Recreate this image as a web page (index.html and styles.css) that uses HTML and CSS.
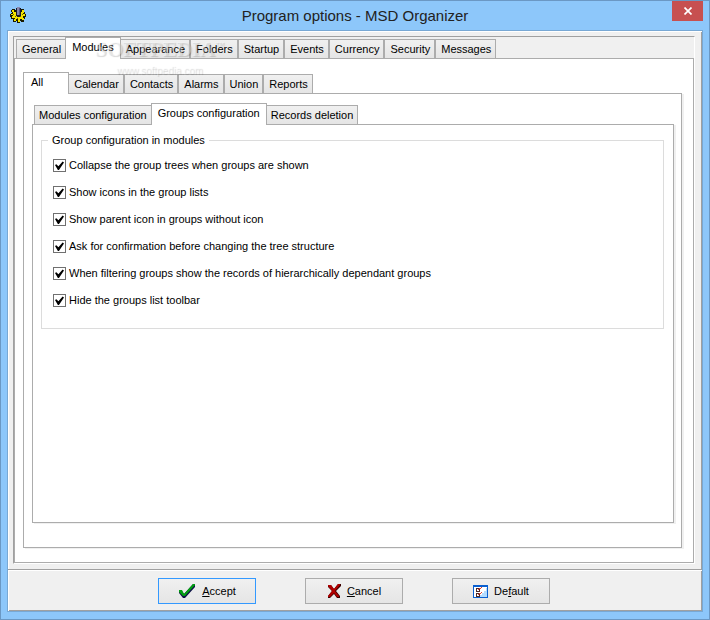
FILE: index.html
```html
<!DOCTYPE html>
<html lang="en">
<head>
    <meta charset="UTF-8">
    <meta name="viewport" content="width=device-width, initial-scale=1.0">
    <title>Program options - MSD Organizer</title>
    <link rel="stylesheet" href="styles.css">
</head>
<body>
    <div class="window">
        <header class="titlebar">
            <svg class="app-icon" width="18" height="18" viewBox="0 0 18 18" shape-rendering="crispEdges" aria-hidden="true">
                <path fill="#1a1a00" d="M3 3h3v1h6V3h3v3h1v2h1v3h-1v2h-1v3h-3v-1h-1v2H8v-2H7v1H4v-3H2v-2H1V8h1V7h1V6H2V4h1z"/>
                <path fill="#f4e400" d="M3 4h2v2h2v3h4V6h2V4h2v3h-1v1h2v2h-2v2h1v2h-2v-1h-2v3H9v-3H7v2H5v-2h1v-1H3v-2h1V9H2V8h2V6H3z"/>
                <path fill="#6b6400" d="M6 10h1v1H6zM11 10h1v1h-1zM8 12h1v1H8zM13 8h1v1h-1zM4 8h1v1H4z"/>
                <path fill="#1a1a2a" d="M7 2h1v8H7zM11 2h1v8h-1zM8 9h3v2H8z"/>
                <path fill="#8888ae" d="M8 1h3v8H8z"/>
                <path fill="#55557c" d="M10 2h1v7h-1z"/>
            </svg>
            <h1>Program options - MSD Organizer</h1>
            <button class="close" aria-label="Close">
                <svg width="8" height="8" viewBox="0 0 8 8"><path d="M.5.5l7 7M7.5.5l-7 7" stroke="#fff" stroke-width="1.7"/></svg>
            </button>
        </header>

        <main class="client">
            <div class="bevel">
                <div class="tabs" role="tablist">
                    <button class="tab" role="tab">General</button>
                    <button class="tab active" role="tab" aria-selected="true">Modules</button>
                    <button class="tab" role="tab">Appearance</button>
                    <button class="tab" role="tab">Folders</button>
                    <button class="tab" role="tab">Startup</button>
                    <button class="tab" role="tab">Events</button>
                    <button class="tab" role="tab">Currency</button>
                    <button class="tab" role="tab">Security</button>
                    <button class="tab" role="tab">Messages</button>
                </div>
                <section class="pane pane-main">
                    <div class="tabs" role="tablist">
                        <button class="tab active first" role="tab" aria-selected="true">All</button>
                        <button class="tab" role="tab">Calendar</button>
                        <button class="tab" role="tab">Contacts</button>
                        <button class="tab" role="tab">Alarms</button>
                        <button class="tab" role="tab">Union</button>
                        <button class="tab" role="tab">Reports</button>
                    </div>
                    <section class="pane pane-modules">
                        <div class="tabs tabs-narrow" role="tablist">
                            <button class="tab" role="tab">Modules configuration</button>
                            <button class="tab active" role="tab" aria-selected="true">Groups configuration</button>
                            <button class="tab" role="tab">Records deletion</button>
                        </div>
                        <section class="pane pane-groups">
                            <fieldset>
                                <legend>Group configuration in modules</legend>
                                <label><input type="checkbox" checked>Collapse the group trees when groups are shown</label>
                                <label><input type="checkbox" checked>Show icons in the group lists</label>
                                <label><input type="checkbox" checked>Show parent icon in groups without icon</label>
                                <label><input type="checkbox" checked>Ask for confirmation before changing the tree structure</label>
                                <label><input type="checkbox" checked>When filtering groups show the records of hierarchically dependant groups</label>
                                <label><input type="checkbox" checked>Hide the groups list toolbar</label>
                            </fieldset>
                        </section>
                    </section>
                </section>
            </div>

            <footer class="actions">
                <button class="action primary">
                    <svg width="18" height="16" viewBox="0 0 18 16" aria-hidden="true">
                        <path fill="#10104a" d="M1 8h3l2 3L15 1h2v3L7 15H5L1 10z"/>
                        <path fill="#00a010" d="M1 7h3l2 4L15 1h2v1L7 13H5L1 9z"/>
                    </svg>
                    <span><u>A</u>ccept</span>
                </button>
                <button class="action">
                    <svg width="14" height="16" viewBox="0 0 14 16" aria-hidden="true">
                        <path fill="#3a0000" d="M1 2h3l3 4 4-5h3v2L9 8l4 5v2h-3l-3-4-4 4H1v-2l4-5-4-4z"/>
                        <path fill="#b00000" d="M1 2h3l3 4 4-5h2v1L8 8l4 5v1h-2L7 10l-4 4H1v-1l4-5-4-5z"/>
                    </svg>
                    <span><u>C</u>ancel</span>
                </button>
                <button class="action">
                    <svg width="15" height="13" viewBox="0 0 15 13" shape-rendering="crispEdges" aria-hidden="true">
                        <path fill="#0a5fd0" d="M0 0h15v13H0z"/>
                        <path fill="#fff" d="M1 2h13v10H1z"/>
                        <path fill="#b5dcff" d="M14 3v9H7v-2h2V8h2V6h2V3z"/>
                        <path fill="#4a2a28" d="M3 3h4v4H3zM3 8h4v4H3z"/>
                        <path fill="#fff" d="M4 4h2v2H4zM4 9h2v2H4z"/>
                        <path fill="#e04030" d="M5 4h1v1H5zM6 3h2v1H6zM8 2h1v1H8zM5 9h1v1H5zM6 8h2v1H6zM8 7h1v1H8z"/>
                    </svg>
                    <span>De<u>f</u>ault</span>
                </button>
            </footer>
        </main>

        <div class="watermark">
            <span class="mark">SOFTPEDIA<sup>™</sup></span>
            <span class="site">www.softpedia.com</span>
        </div>
    </div>
</body>
</html>
```
FILE: styles.css
```css
* {
    box-sizing: border-box;
}
body {
    margin: 0;
    font-family: "Liberation Sans", Arial, sans-serif;
    font-size: 11px;
    line-height: 13px;
    color: #000;
}
button {
    font: inherit;
    color: inherit;
    margin: 0;
}
.window {
    position: relative;
    display: flex;
    flex-direction: column;
    min-height: 100vh;
    padding: 0 6px 7px;
    border: 1px solid #6b98c4;
    background: #8dc7fa;
}
.titlebar {
    display: flex;
    align-items: flex-start;
    height: 29px;
    padding-left: 2px;
}
.app-icon {
    margin-top: 5px;
}
.titlebar h1 {
    flex: 1;
    margin: 0;
    padding-left: 11px;
    font-size: 15px;
    font-weight: normal;
    line-height: 29px;
    text-align: center;
    color: #222;
}
.close {
    display: flex;
    align-items: center;
    justify-content: center;
    width: 31px;
    height: 20px;
    padding: 0;
    border: none;
    background: #c75050;
}

.client {
    flex: 1;
    display: flex;
    flex-direction: column;
    border: 1px solid #78a8d4;
    background: #f0f0f0;
    box-shadow: inset 1px 1px #fff, inset -1px -1px #a0a0a0;
}
.bevel {
    flex: 1;
    display: flex;
    flex-direction: column;
    margin: 5px 7px 5px 5px;
    border: 1px solid #a0a0a0;
    border-right-color: #fff;
    border-bottom-color: #fff;
}

.tabs {
    display: flex;
    align-items: flex-end;
    height: 21px;
    padding: 0 2px;
}
.tab {
    height: 19px;
    padding: 1px 4px 0 5px;
    border: 1px solid #acacac;
    border-bottom: none;
    background: linear-gradient(#f0f0f0, #e5e5e5);
}
.tabs-narrow .tab {
    padding: 1px 4px 0;
}
.tabs .tab.active {
    position: relative;
    height: 22px;
    margin: 0 -1px -1px;
    padding: 0 6px 3px;
    background: #fff;
}
.tabs .tab.first {
    margin-left: -2px;
    padding: 0 25px 3px 7px;
}
.pane {
    flex: 1;
    display: flex;
    flex-direction: column;
    border: 1px solid #acacac;
    background: #fff;
}
.pane-main {
    padding: 13px 11px 14px 8px;
}
.pane-modules {
    padding: 9px 7px 24px 8px;
    box-shadow: 2px 1px #f0f0f0;
}
.pane-groups {
    padding: 9px 9px 9px 8px;
    box-shadow: 2px 1px #f0f0f0;
}

fieldset {
    display: flex;
    flex-direction: column;
    gap: 14px;
    margin: 0;
    padding: 12px 11px 21px;
    border: 1px solid #dcdcdc;
}
legend {
    margin-left: -5px;
    padding: 0 4px;
}
label {
    display: flex;
    align-items: center;
    gap: 3px;
}
input[type="checkbox"] {
    appearance: none;
    width: 13px;
    height: 13px;
    margin: 0;
    border: 1px solid #707070;
    background: #fff;
}
input[type="checkbox"]:checked::before {
    content: "";
    display: block;
    width: 9px;
    height: 9px;
    margin: 1px;
    background: #000;
    clip-path: polygon(0 45%, 15% 35%, 38% 58%, 85% 5%, 100% 18%, 44% 100%, 32% 100%);
}

.actions {
    display: flex;
    justify-content: center;
    gap: 49px;
    padding: 8px 2px 7px 0;
    border-top: 1px solid #a0a0a0;
    box-shadow: inset 0 1px #fff;
}
.action {
    display: flex;
    align-items: center;
    justify-content: center;
    gap: 6px;
    width: 98px;
    height: 26px;
    padding: 0;
    border: 1px solid #acacac;
    background: linear-gradient(#f0f0f0, #e5e5e5);
}
.action.primary {
    border-color: #3399ff;
}

.watermark {
    position: absolute;
    top: 36px;
    left: 94px;
    display: flex;
    flex-direction: column;
    align-items: center;
    pointer-events: none;
    color: rgba(255, 255, 255, 0.35);
    text-shadow: 1px 1px 1px rgba(0, 0, 0, 0.16);
}
.mark {
    font-family: "Liberation Serif", "Times New Roman", serif;
    font-size: 21px;
    font-weight: bold;
    line-height: 24px;
}
.mark sup {
    font-size: 9px;
    line-height: 1px;
}
.site {
    font-size: 10px;
    line-height: 20px;
}
```
